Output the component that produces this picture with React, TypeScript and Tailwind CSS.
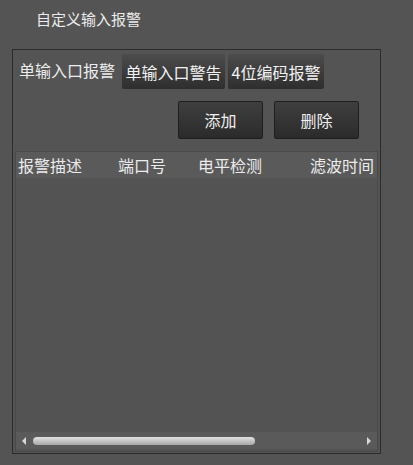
export default function App() {
    const cols = [
        { label: '报警描述', w: 'w-[100px]' },
        { label: '端口号', w: 'w-[80px]' },
        { label: '电平检测', w: 'w-[112px]' },
        { label: '滤波时间', w: 'w-[70px]' },
    ];

    return (
        <div className="w-[413px] h-[465px] bg-[#545454] text-[#ececec] flex flex-col font-['Noto_Sans_CJK_SC',sans-serif]">
            <div className="pl-[36px] pt-[8px] h-[49px] text-[15px] leading-[22px]">自定义输入报警</div>

            <div className="ml-[12px] w-[369px] h-[405px] border border-[#2b2b2b] flex flex-col">
                {/* tabs */}
                <div className="flex items-center pl-[6px] pt-[4px] gap-[3px]">
                    <span className="text-[16px] leading-[20px] pr-[4px] -mt-[4px]">单输入口报警</span>
                    <button className="h-[35px] w-[103px] rounded-[2px] bg-gradient-to-b from-[#4c4c4c] to-[#2e2e2e] text-[16px] leading-[20px] text-[#f2f2f2]">单输入口警告</button>
                    <button className="h-[35px] w-[96px] rounded-[2px] bg-gradient-to-b from-[#4c4c4c] to-[#2e2e2e] text-[16px] leading-[20px] text-[#f2f2f2]">4位编码报警</button>
                </div>

                {/* actions */}
                <div className="flex justify-end gap-[11px] pr-[21px] mt-[12px]">
                    <button className="h-[38px] w-[85px] border border-[#1e1e1e] rounded-[2px] bg-gradient-to-b from-[#3f3f3f] to-[#2b2b2b] text-[16px] text-[#f0f0f0]">添加</button>
                    <button className="h-[38px] w-[85px] border border-[#1e1e1e] rounded-[2px] bg-gradient-to-b from-[#3f3f3f] to-[#2b2b2b] text-[16px] text-[#f0f0f0]">删除</button>
                </div>

                {/* table */}
                <div className="ml-[2px] mt-[12px] w-[363px] flex-1 mb-[1px] border border-[#4a4a4a] flex flex-col bg-[#535353]">
                    <div className="h-[26px] bg-[#5a5a5a] flex items-center text-[16px] leading-[20px] pl-[2px]">
                        {cols.map(c => (
                            <div key={c.label} className={`${c.w} shrink-0 whitespace-nowrap`}>{c.label}</div>
                        ))}
                    </div>
                    <div className="flex-1" />
                    <div className="h-[17px] bg-[#5a5a5a] flex items-center px-[5px] mb-[2px]">
                        <svg width="6" height="8" viewBox="0 0 6 8"><path d="M5 0 L1 4 L5 8 Z" fill="#d8d8d8" /></svg>
                        <div className="ml-[6px] w-[222px] h-[8px] rounded-full bg-gradient-to-b from-[#e2e2e2] to-[#a8a8a8]" />
                        <div className="flex-1" />
                        <svg width="6" height="8" viewBox="0 0 6 8"><path d="M1 0 L5 4 L1 8 Z" fill="#d8d8d8" /></svg>
                    </div>
                </div>
            </div>
        </div>
    );
}
